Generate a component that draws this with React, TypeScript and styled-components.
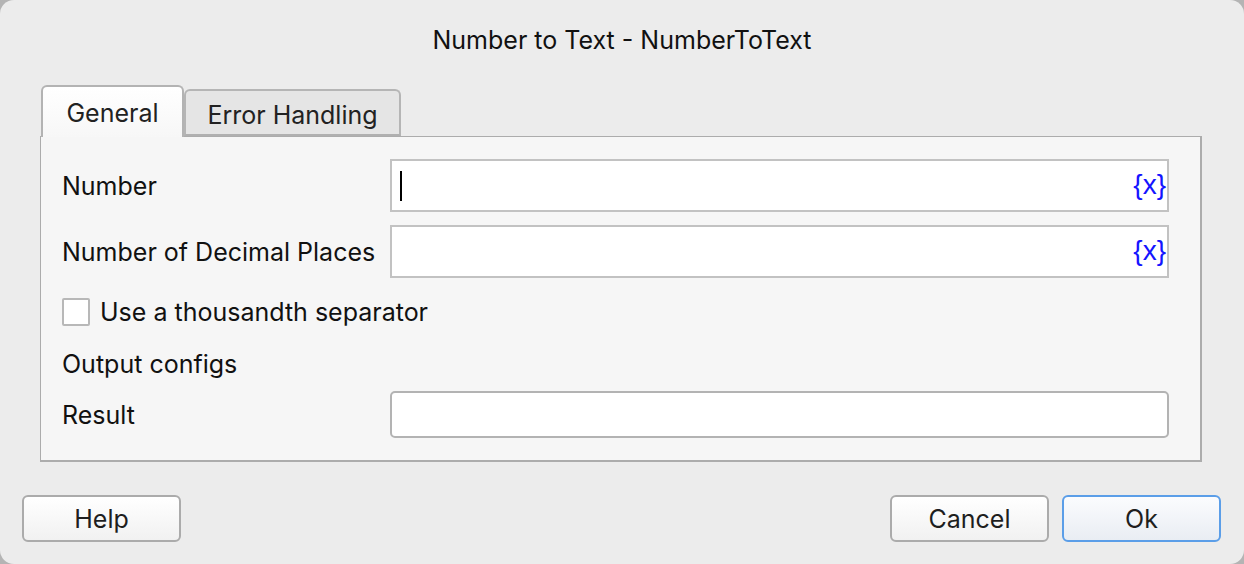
import React from "react";
import styled, { createGlobalStyle } from "styled-components";

const Global = createGlobalStyle`
  html, body { margin: 0; padding: 0; background: #b4b4b4; }
  body { font-family: Inter, "Liberation Sans", Arial, sans-serif; }
  * { box-sizing: border-box; }
`;

const Dialog = styled.div`
  width: 1244px;
  height: 564px;
  background: #ececec;
  border-radius: 14px;
  overflow: hidden;
  display: flex;
  flex-direction: column;
  color: #1b1b1b;
`;

const Title = styled.div`
  height: 85px;
  padding-top: 25px;
  line-height: 30px;
  font-size: 25px;
  text-align: center;
  color: #111;
`;

const Body = styled.div`
  padding: 0 42px 0 40px;
  display: flex;
  flex-direction: column;
`;

const TabBar = styled.div`
  display: flex;
  align-items: flex-end;
  padding-left: 1px;
  height: 51px;
`;

const Tab = styled.div<{ $active?: boolean }>`
  height: ${(p) => (p.$active ? "52px" : "47px")};
  width: ${(p) => (p.$active ? "143px" : "217px")};
  margin-bottom: ${(p) => (p.$active ? "-1px" : "0")};
  position: relative;
  z-index: ${(p) => (p.$active ? 2 : 1)};
  border: 2px solid ${(p) => (p.$active ? "#b3b3b3" : "#b5b5b5")};
  border-bottom: ${(p) => (p.$active ? "none" : "2px solid #b0b0b0")};
  border-radius: 6px 6px 0 0;
  background: ${(p) =>
    p.$active ? "linear-gradient(#ffffff, #f7f7f7)" : "#e5e5e5"};
  display: flex;
  align-items: center;
  justify-content: center;
  font-size: 25px;
  padding-top: ${(p) => (p.$active ? "2px" : "4px")};
  color: #222;
`;

const Panel = styled.div`
  height: 326px;
  background: #f6f6f6;
  border: 1px solid #acacac;
  border-right-width: 2px;
  border-bottom-width: 2px;
  padding: 22px 31px 0 21px;
  display: flex;
  flex-direction: column;
`;

const FieldRow = styled.div<{ $h: number; $mt: number }>`
  display: grid;
  grid-template-columns: 328px 1fr;
  align-items: center;
  height: ${(p) => p.$h}px;
  margin-top: ${(p) => p.$mt}px;
`;

const Label = styled.div`
  font-size: 25px;
  color: #111;
`;

const Input = styled.div<{ $rounded?: boolean }>`
  height: 100%;
  background: #fff;
  border: ${(p) => (p.$rounded ? "2px solid #b3b3b3" : "2px solid #c2c2c2")};
  border-radius: ${(p) => (p.$rounded ? "5px" : "0")};
  display: flex;
  align-items: center;
  justify-content: space-between;
  padding: 0 1px 0 8px;
`;

const Caret = styled.span`
  width: 2px;
  height: 30px;
  background: #000;
`;

const VarBadge = styled.span`
  margin-left: auto;
  color: #1414ff;
  font-size: 28px;
  font-family: "Liberation Sans", Arial, sans-serif;
  line-height: 1;
  padding-bottom: 2px;
`;

const CheckRow = styled.label`
  display: flex;
  align-items: center;
  gap: 10px;
  height: 28px;
  margin-top: 20px;
  font-size: 25px;
  color: #111;
`;

const Box = styled.span`
  width: 28px;
  height: 28px;
  border: 2px solid #b8b8b8;
  border-radius: 2px;
  background: #fff;
`;

const Section = styled.div`
  height: 28px;
  margin-top: 24px;
  font-size: 25px;
  display: flex;
  align-items: center;
  color: #111;
`;

const Footer = styled.div`
  display: flex;
  align-items: center;
  padding: 33px 23px 0 22px;
  gap: 13px;
`;

const Button = styled.button<{ $primary?: boolean }>`
  width: 159px;
  height: 47px;
  border-radius: 6px;
  border: 2px solid ${(p) => (p.$primary ? "#5b9ee8" : "#ababab")};
  background: ${(p) =>
    p.$primary
      ? "linear-gradient(#fbfcfe, #e9edf3)"
      : "linear-gradient(#ffffff, #f1f1f1)"};
  font-family: inherit;
  font-size: 25px;
  color: #1e1e1e;
  padding: 0;
`;

const Spacer = styled.div`
  flex: 1;
`;

export default function App() {
  return (
    <>
      <Global />
      <Dialog>
        <Title>Number to Text - NumberToText</Title>
        <Body>
          <TabBar>
            <Tab $active>General</Tab>
            <Tab>Error Handling</Tab>
          </TabBar>
          <Panel>
            <FieldRow $h={53} $mt={0}>
              <Label>Number</Label>
              <Input>
                <Caret />
                <VarBadge>{"{x}"}</VarBadge>
              </Input>
            </FieldRow>
            <FieldRow $h={53} $mt={13}>
              <Label>Number of Decimal Places</Label>
              <Input>
                <VarBadge>{"{x}"}</VarBadge>
              </Input>
            </FieldRow>
            <CheckRow>
              <Box />
              Use a thousandth separator
            </CheckRow>
            <Section>Output configs</Section>
            <FieldRow $h={47} $mt={13}>
              <Label>Result</Label>
              <Input $rounded />
            </FieldRow>
          </Panel>
        </Body>
        <Footer>
          <Button>Help</Button>
          <Spacer />
          <Button>Cancel</Button>
          <Button $primary>Ok</Button>
        </Footer>
      </Dialog>
    </>
  );
}
